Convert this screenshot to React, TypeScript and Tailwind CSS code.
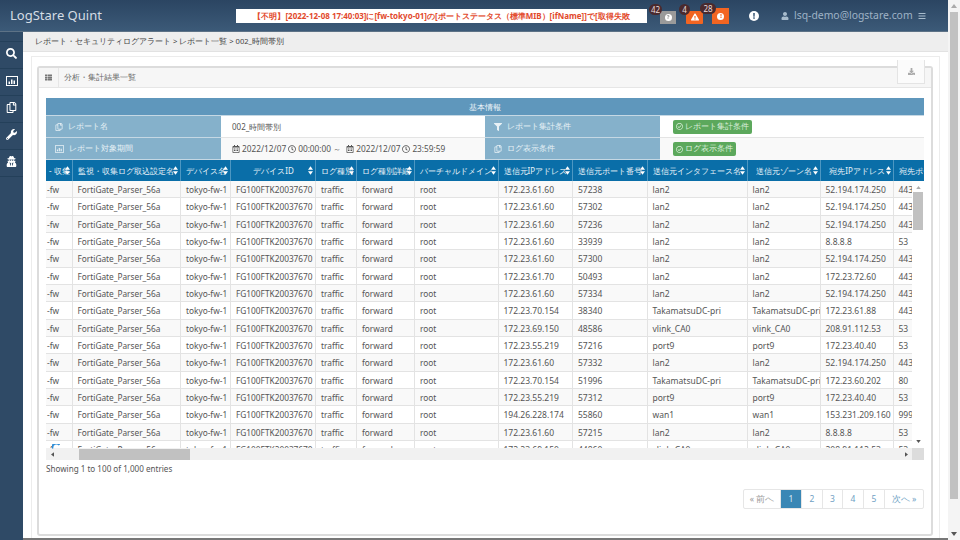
import { FaSearch, FaWrench, FaUserSecret, FaRegCopy, FaFilter, FaRegClock, FaExclamation, FaExclamationTriangle, FaQuestion, FaUser, FaBars, FaRegCalendarAlt, FaThList, FaDownload, FaRegCheckCircle } from "react-icons/fa";

const cols = "grid-cols-[26.5px_108.5px_50px_85px_41px_58px_83.5px_74.5px_74.5px_100px_73px_73px_30.5px]";
const heads: [string, boolean][] = [
  ["- 収集", false], ["監視・収集ログ取込設定名", false], ["デバイス名", false], ["デバイスID", true], ["ログ種別", false], ["ログ種別詳細", false],
  ["バーチャルドメイン", false], ["送信元IPアドレス", false], ["送信元ポート番号", false], ["送信元インタフェース名", false], ["送信元ゾーン名", true], ["宛先IPアドレス", true], ["宛先ポート", false],
];
const T = "TakamatsuDC-pri";
const rows: [string, string, string, string, string][] = [
  ["172.23.61.60", "57238", "lan2", "52.194.174.250", "443"],
  ["172.23.61.60", "57302", "lan2", "52.194.174.250", "443"],
  ["172.23.61.60", "57236", "lan2", "52.194.174.250", "443"],
  ["172.23.61.60", "33939", "lan2", "8.8.8.8", "53"],
  ["172.23.61.60", "57300", "lan2", "52.194.174.250", "443"],
  ["172.23.61.70", "50493", "lan2", "172.23.72.60", "443"],
  ["172.23.61.60", "57334", "lan2", "52.194.174.250", "443"],
  ["172.23.70.154", "38340", T, "172.23.61.88", "443"],
  ["172.23.69.150", "48586", "vlink_CA0", "208.91.112.53", "53"],
  ["172.23.55.219", "57216", "port9", "172.23.40.40", "53"],
  ["172.23.61.60", "57332", "lan2", "52.194.174.250", "443"],
  ["172.23.70.154", "51996", T, "172.23.60.202", "80"],
  ["172.23.55.219", "57312", "port9", "172.23.40.40", "53"],
  ["194.26.228.174", "55860", "wan1", "153.231.209.160", "999"],
  ["172.23.61.60", "57215", "lan2", "8.8.8.8", "53"],
  ["172.23.69.150", "44860", "vlink_CA0", "208.91.112.53", "53"],
];

function Sort() {
  return (
    <svg viewBox="0 0 6 10" className="absolute right-[2px] top-[6px] w-[5px] h-[9px] fill-white">
      <path d="M3 0l3 4H0zM3 10L0 6h6z" />
    </svg>
  );
}

function Side({ children }: { children: React.ReactNode }) {
  return <div className="h-[27px] pb-[3px] flex items-center justify-center border-b border-[#24405a] text-white text-[11px]">{children}</div>;
}

function ChartBox({ className }: { className?: string }) {
  return (
    <svg viewBox="0 0 12 10" className={className}>
      <path fill="currentColor" fillRule="evenodd" d="M0 0h12v10H0zM1 1v8h10V1zM2.5 8V5.5H4V8zM5 8V3.500h1.500V8zM7.500 8V4.500H9V8z" />
    </svg>
  );
}

function Label({ icon, text }: { icon: React.ReactNode; text: string }) {
  return (
    <div className="bg-[#85b1cb] flex items-center gap-[5px] pl-[9px] border-b border-[#c5d8e4] text-[#e8f1f6] text-[7.6px]">
      <span className="text-[8px]">{icon}</span>{text}
    </div>
  );
}

function GreenBtn({ text }: { text: string }) {
  return (
    <span className="inline-flex items-center gap-[2px] h-[14px] px-[3px] rounded-[2px] bg-[#5ca85c] text-[#dcefdc] text-[7.6px]">
      <FaRegCheckCircle className="text-[7px]" />{text}
    </span>
  );
}

function Page({ t, active, w, muted }: { t: string; active?: boolean; w: string; muted?: boolean }) {
  return (
    <div className={`${w} flex items-center justify-center border-r border-[#e6e6e6] last:border-r-0 ${active ? "bg-[#3a87b5] text-[#dbeaf3]" : muted ? "text-[#999]" : "text-[#6f9fc4]"}`}>{t}</div>
  );
}

export default function App() {
  return (
    <div className="w-[960px] h-[540px] overflow-hidden flex bg-white text-[8.3px] text-[#555] font-['Noto_Sans','Noto_Sans_CJK_JP',sans-serif]">
      <div className="w-[948px] flex flex-col shrink-0">
        <header className="h-8 shrink-0 flex items-center bg-gradient-to-b from-[#2b4562] to-[#3c5a78] border-b border-[#5d7286]">
          <div className="w-[236px] pl-[10px] text-[13px] text-[#d5dde5] font-['Open_Sans',sans-serif]">LogStare Quint</div>
          <div className="w-[411px] h-[14px] bg-white text-[#e2492c] text-[8px] font-bold leading-[14px] text-center whitespace-nowrap overflow-hidden">【不明】[2022-12-08 17:40:03]に[fw-tokyo-01]の[ポートステータス（標準MIB）[ifName]]で[取得失敗</div>
          <div className="relative ml-[13px] mt-[3px] w-4 h-[13px] bg-[#9a9a9a] flex items-center justify-center">
            <span className="absolute -top-[7px] -left-[11px] h-[11px] min-w-[12px] px-[2px] rounded-full bg-[#4a2a2e] text-[8px] leading-[11px] text-center text-[#e8dcdc]">42</span>
            <span className="w-[7px] h-[7px] rounded-full bg-white flex items-center justify-center"><FaQuestion className="text-[4px] text-[#999]" /></span>
          </div>
          <div className="relative ml-[10px] mt-[3px] w-[17px] h-[13px] bg-[#f26522] rounded-[1px] flex items-center justify-center">
            <span className="absolute -top-[7px] -left-[7px] h-[11px] min-w-[11px] rounded-full bg-[#4a2a2e] text-[8px] leading-[11px] text-center text-[#e8dcdc]">4</span>
            <FaExclamationTriangle className="text-[8px] text-white" />
          </div>
          <div className="relative ml-[9px] mt-[1px] w-[17px] h-[16px] bg-[#f26522] flex items-center justify-center">
            <span className="absolute -top-[5px] -left-[12px] h-[11px] w-[16px] rounded-full bg-[#4a2a2e] text-[8px] leading-[11px] text-center text-[#e8dcdc]">28</span>
            <span className="w-[7px] h-[7px] rounded-full bg-white flex items-center justify-center"><FaExclamation className="text-[4px] text-[#f26522]" /></span>
          </div>
          <span className="ml-5 w-[10px] h-[10px] rounded-full bg-white flex items-center justify-center"><FaExclamation className="text-[6px] text-[#3c5a78]" /></span>
          <FaUser className="ml-[22px] text-[8px] text-[#a8bccd]" />
          <span className="ml-[5px] text-[10.4px] text-[#9fb3c6] font-['Open_Sans',sans-serif] whitespace-nowrap">lsq-demo@logstare.com</span>
          <FaBars className="ml-[5px] text-[8px] text-[#a8bccd]" />
        </header>
        <div className="flex-1 flex min-h-0">
          <aside className="w-[23px] shrink-0 flex flex-col pt-[9px] bg-[#2f4a66]">
            <div className="border-t border-[#24405a]" />
            <Side><FaSearch /></Side>
            <Side><ChartBox className="w-3 h-[10px]" /></Side>
            <Side><FaRegCopy /></Side>
            <Side><FaWrench /></Side>
            <Side><FaUserSecret /></Side>
          </aside>
          <main className="flex-1 min-w-0 flex flex-col border-b-2 border-[#777]">
            <div className="h-5 shrink-0 bg-[#eeeeee] border-b border-[#e2e2e2] flex items-center pl-3 text-[#444] text-[7.6px]">レポート・セキュリティログアラート &gt; レポート一覧 &gt; 002_時間帯別</div>
            <div className="flex-1 min-h-0 ml-2 mr-2 mt-1 border-x border-t border-[#ececec] pt-[9px] pl-[5px] pr-[6px] pb-[2px] flex">
              <section className="relative flex-1 min-w-0 border-2 border-[#dcdcdc] rounded-[3px] flex flex-col">
                <div className="h-[20px] shrink-0 bg-[#f6f6f6] border-b border-[#e6e6e6] flex items-center text-[#666] text-[8.2px]">
                  <div className="w-[20px] h-full flex items-center justify-center border-r border-[#e6e6e6]"><FaThList className="text-[7px] text-[#777]" /></div>
                  <span className="ml-[5px]">分析・集計結果一覧</span>
                </div>
                <div className="absolute right-[6px] -top-[8px] w-[28px] h-[24px] bg-[#fbfbfb] border-x border-b border-[#e4e4e4] flex items-center justify-center"><FaDownload className="text-[7px] text-[#aaa]" /></div>
                <div className="flex-1 min-h-0 px-[7px] pt-[10px] flex flex-col">
                  <div className="w-[878px]">
                    <div className="h-[18px] bg-[#5f97bc] border-b border-[#c5d8e4] text-center leading-[17px] text-[#eef5f9] text-[8px]">基本情報</div>
                    <div className="grid grid-cols-[175px_264px_175px_264px] grid-rows-[22px_22px]">
                      <Label icon={<FaRegCopy />} text="レポート名" />
                      <div className="flex items-center pl-[11px] border-b border-[#e4e4e4] text-[8px]">002_時間帯別</div>
                      <Label icon={<FaFilter />} text="レポート集計条件" />
                      <div className="flex items-center pl-[13px] border-b border-[#e4e4e4]"><GreenBtn text="レポート集計条件" /></div>
                      <Label icon={<ChartBox className="w-[9px] h-2" />} text="レポート対象期間" />
                      <div className="flex items-center pl-[11px] gap-[2px] bg-[#f9f9f9] whitespace-nowrap text-[8.3px]">
                        <FaRegCalendarAlt className="text-[8px]" />2022/12/07<FaRegClock className="text-[8px]" />00:00:00 ～<FaRegCalendarAlt className="ml-[3px] text-[8px]" />2022/12/07<FaRegClock className="text-[8px]" />23:59:59
                      </div>
                      <Label icon={<FaRegCopy />} text="ログ表示条件" />
                      <div className="flex items-center pl-[13px] bg-[#f9f9f9]"><GreenBtn text="ログ表示条件" /></div>
                    </div>
                  </div>
                  <div className="relative w-[878px]">
                    <div className={`grid ${cols} h-[21px] bg-[#0a6ea8] text-[#e8f2f8] text-[8px] overflow-hidden`}>
                      {heads.map(([h, c], i) => (
                        <div key={i} className={`relative h-full flex items-center ${c ? "justify-center pr-1" : ""} ${i === 0 ? "pl-[3px]" : "pl-[5px]"} overflow-hidden whitespace-nowrap border-r border-[#4d97c2] last:border-r-0`}>
                          {h}
                          {i < 12 && <Sort />}
                        </div>
                      ))}
                    </div>
                    <div className="flex h-[267px]">
                      <div className="flex-1 min-w-0 overflow-hidden">
                        {rows.map((r, i) => (
                          <div key={i} className={`grid ${cols} h-[17.33px] border-b border-[#e3e3e3] ${i % 2 === 0 ? "bg-[#f9f9f9]" : "bg-white"}`}>
                            {["-fw", "FortiGate_Parser_56a", "tokyo-fw-1", "FG100FTK20037670", "traffic", "forward", "root", r[0], r[1], r[2], r[2], r[3], r[4]].map((c, j) => (
                              <div key={j} className={`${j === 0 ? "pl-[1px]" : "pl-[5px]"} ${j >= 7 ? "text-[8.5px]" : ""} leading-[17px] whitespace-nowrap overflow-hidden border-r border-[#e3e3e3] last:border-r-0`}>{c}</div>
                            ))}
                          </div>
                        ))}
                      </div>
                      <div className="w-3 shrink-0 bg-white flex flex-col items-center">
                        <svg viewBox="0 0 6 4" className="w-[5px] h-[3px] mt-[5px] fill-[#aaa]"><path d="M3 0l3 4H0z" /></svg>
                        <div className="w-[10px] h-[38px] mt-[3px] bg-[#c1c1c1]" />
                        <svg viewBox="0 0 6 4" className="w-[5px] h-[3px] mt-auto mb-[5px] fill-[#555]"><path d="M3 4L0 0h6z" /></svg>
                      </div>
                    </div>
                    <svg viewBox="0 0 8 5" className="absolute left-[6px] top-[284px] w-2 h-[5px]">
                      <path d="M0.500 4.500A4 4 0 0 1 7.500 1" fill="none" stroke="#2f8fd8" strokeWidth="2" />
                    </svg>
                    <div className="h-3 bg-[#f1f1f1] flex items-center">
                      <svg viewBox="0 0 4 6" className="w-[3px] h-[5px] ml-[5px] fill-[#555]"><path d="M0 3l4-3v6z" /></svg>
                      <div className="w-[111px] h-[11px] ml-[25px] bg-[#c1c1c1]" />
                      <svg viewBox="0 0 4 6" className="w-[3px] h-[5px] ml-auto mr-[4px] fill-[#555]"><path d="M4 3L0 0v6z" /></svg>
                      <div className="w-3 h-full bg-[#dcdcdc]" />
                    </div>
                  </div>
                  <div className="mt-[3px] h-[12px] leading-[12px] text-[8.1px]">Showing 1 to 100 of 1,000 entries</div>
                  <div className="mt-[14px] w-[878px] flex justify-end">
                    <div className="flex h-5 border border-[#e6e6e6] rounded-[2px] text-[8.5px]">
                      <Page t="« 前へ" w="w-[37px]" muted />
                      <Page t="1" w="w-[21px]" active />
                      <Page t="2" w="w-[21px]" />
                      <Page t="3" w="w-[20px]" />
                      <Page t="4" w="w-[21px]" />
                      <Page t="5" w="w-[21px]" />
                      <Page t="次へ »" w="w-[38px]" />
                    </div>
                  </div>
                </div>
              </section>
            </div>
          </main>
        </div>
      </div>
      <div className="w-3 shrink-0 bg-[#f4f4f4] flex flex-col items-center">
        <svg viewBox="0 0 6 4" className="w-[6px] h-[4px] mt-1 fill-[#aaa]"><path d="M3 0l3 4H0z" /></svg>
        <div className="w-2 h-[487px] mt-1 bg-[#c1c1c1]" />
        <svg viewBox="0 0 6 4" className="w-[6px] h-[4px] mt-auto mb-1 fill-[#555]"><path d="M3 4L0 0h6z" /></svg>
      </div>
    </div>
  );
}
